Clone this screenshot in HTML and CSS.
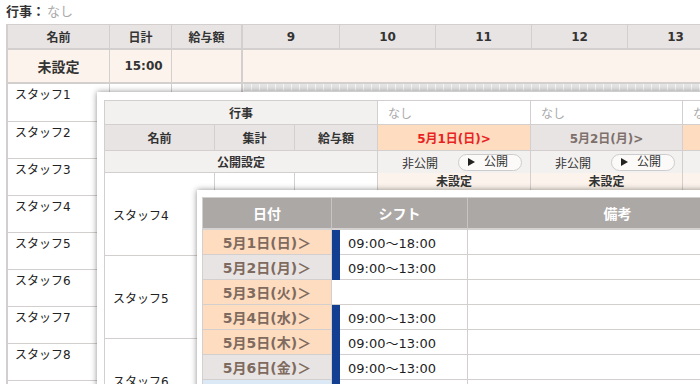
FILE: index.html
```html
<!DOCTYPE html>
<html lang="ja">
	<head>
		<meta charset="utf-8">
		<meta name="viewport" content="width=device-width, initial-scale=1.0">
		<title>シフト表</title>
		<link rel="stylesheet" href="styles.css">
	</head>
	<body>
		<div class=page>
			<p class=event><span class=eventLabel>行事：</span><span class=none>なし</span></p>
			<div class=sheet>
				<div class="sheetRow sheetHead">
					<div class=cell>名前</div>
					<div class=cell>日計</div>
					<div class="cell pay">給与額</div>
					<div class="cell hour">9</div>
					<div class="cell hour">10</div>
					<div class="cell hour">11</div>
					<div class="cell hour">12</div>
					<div class="cell hour">13</div>
				</div>
				<div class="sheetRow sheetUnset">
					<div class="cell unsetName">未設定</div>
					<div class="cell unsetTotal">15:00</div>
					<div class="cell pay"></div>
					<div class="cell wide"></div>
				</div>
				<div class="sheetRow staff first">
					<div class="cell staffName">スタッフ1</div>
					<div class=cell></div>
					<div class="cell pay"></div>
					<div class="cell wide ticks"></div>
				</div>
				<div class="sheetRow staff">
					<div class="cell staffName">スタッフ2</div>
					<div class=cell></div>
					<div class="cell pay"></div>
					<div class="cell wide ticks"></div>
				</div>
				<div class="sheetRow staff">
					<div class="cell staffName">スタッフ3</div>
					<div class=cell></div>
					<div class="cell pay"></div>
					<div class="cell wide ticks"></div>
				</div>
				<div class="sheetRow staff">
					<div class="cell staffName">スタッフ4</div>
					<div class=cell></div>
					<div class="cell pay"></div>
					<div class="cell wide ticks"></div>
				</div>
				<div class="sheetRow staff">
					<div class="cell staffName">スタッフ5</div>
					<div class=cell></div>
					<div class="cell pay"></div>
					<div class="cell wide ticks"></div>
				</div>
				<div class="sheetRow staff">
					<div class="cell staffName">スタッフ6</div>
					<div class=cell></div>
					<div class="cell pay"></div>
					<div class="cell wide ticks"></div>
				</div>
				<div class="sheetRow staff">
					<div class="cell staffName">スタッフ7</div>
					<div class=cell></div>
					<div class="cell pay"></div>
					<div class="cell wide ticks"></div>
				</div>
				<div class="sheetRow staff">
					<div class="cell staffName">スタッフ8</div>
					<div class=cell></div>
					<div class="cell pay"></div>
					<div class="cell wide ticks"></div>
				</div>
				<div class="sheetRow staff">
					<div class="cell staffName">スタッフ9</div>
					<div class=cell></div>
					<div class="cell pay"></div>
					<div class="cell wide ticks"></div>
				</div>
			</div>
		</div>

		<section class="dialog dayDialog">
			<div class=dayGrid>
				<div class="dcell label span3">行事</div>
				<div class="dcell eventCell">なし</div>
				<div class="dcell eventCell">なし</div>
				<div class="dcell eventCell">なし</div>

				<div class="dcell head">名前</div>
				<div class="dcell head">集計</div>
				<div class="dcell head">給与額</div>
				<div class="dcell dayHead holiday">5月1日(日)&gt;</div>
				<div class="dcell dayHead">5月2日(月)&gt;</div>
				<div class="dcell dayHead holiday">5月3日(火)&gt;</div>

				<div class="dcell label span3">公開設定</div>
				<div class="dcell publish"><span>非公開</span><button class=pill><span class=arrow></span>公開</button></div>
				<div class="dcell publish"><span>非公開</span><button class=pill><span class=arrow></span>公開</button></div>
				<div class="dcell publish"><span>非公開</span><button class=pill><span class=arrow></span>公開</button></div>

				<div class="dcell staffCell">スタッフ4</div>
				<div class="dcell blank"></div>
				<div class="dcell blank"></div>
				<div class="dcell dayCell"><div class=unset>未設定</div></div>
				<div class="dcell dayCell"><div class=unset>未設定</div></div>
				<div class="dcell dayCell"><div class=unset>未設定</div></div>

				<div class="dcell staffCell">スタッフ5</div>
				<div class="dcell blank"></div>
				<div class="dcell blank"></div>
				<div class="dcell dayCell"><div class=unset>未設定</div></div>
				<div class="dcell dayCell"><div class=unset>未設定</div></div>
				<div class="dcell dayCell"><div class=unset>未設定</div></div>

				<div class="dcell staffCell">スタッフ6</div>
				<div class="dcell blank"></div>
				<div class="dcell blank"></div>
				<div class="dcell dayCell"><div class=unset>未設定</div></div>
				<div class="dcell dayCell"><div class=unset>未設定</div></div>
				<div class="dcell dayCell"><div class=unset>未設定</div></div>
			</div>
		</section>

		<section class="dialog shiftDialog">
			<div class=shiftGrid>
				<div class=shead>日付</div>
				<div class=shead>シフト</div>
				<div class=shead>備考</div>

				<div class="date holiday">5月1日(日)＞</div>
				<div class="shift on">09:00～18:00</div>
				<div class=note></div>

				<div class=date>5月2日(月)＞</div>
				<div class="shift on">09:00～13:00</div>
				<div class=note></div>

				<div class="date holiday">5月3日(火)＞</div>
				<div class=shift></div>
				<div class=note></div>

				<div class="date holiday">5月4日(水)＞</div>
				<div class="shift on">09:00～13:00</div>
				<div class=note></div>

				<div class="date holiday">5月5日(木)＞</div>
				<div class="shift on">09:00～13:00</div>
				<div class=note></div>

				<div class=date>5月6日(金)＞</div>
				<div class="shift on">09:00～13:00</div>
				<div class=note></div>

				<div class="date saturday">5月7日(土)＞</div>
				<div class="shift on">09:00～13:00</div>
				<div class=note></div>
			</div>
		</section>
	</body>
</html>
```

FILE: styles.css
```css
html, body {
	overflow: hidden;
}

body {
	margin: 0;
	font-family: "DejaVu Sans", "Noto Sans CJK JP", sans-serif;
	font-size: 12px;
	color: #333;
	background-color: #fff;
}

.page {
	padding: 4px 0 0 6px;
}

.event {
	margin: 0 0 4px;
	font-size: 13px;
	line-height: 16px;
}

.eventLabel {
	font-weight: bold;
}

.none {
	color: #aaa;
	margin-left: 2px;
}

/* background schedule sheet */

.sheet {
	width: 718px;
	border-left: 2px solid #d3cfce;
	border-top: 1px solid #d3cfce;
}

.sheetRow {
	display: grid;
	grid-template-columns: 102px 62px 71px 97px 96px 96px 96px 96px;
}

.cell {
	box-sizing: border-box;
	border-right: 1px solid #d3cfce;
	border-bottom: 1px solid #d3cfce;
}

.cell.pay {
	border-right-width: 2px;
}

.cell.wide {
	grid-column: span 5;
}

.sheetHead {
	height: 25px;
	background-color: #e8e4e3;
	font-weight: bold;
}

.sheetHead .cell {
	display: flex;
	align-items: center;
	justify-content: center;
	border-bottom-width: 2px;
}

.sheetUnset {
	height: 34px;
	background-color: #fcf4ec;
	font-weight: bold;
}

.sheetUnset .cell {
	display: flex;
	align-items: center;
	justify-content: center;
	border-bottom-width: 2px;
}

.unsetName {
	font-size: 14px;
}

.unsetTotal {
	padding-left: 6px;
}

.staff {
	height: 37px;
}

.staff.first {
	height: 38px;
}

.staffName {
	padding: 2px 0 0 7px;
	line-height: 18px;
	color: #222;
}

.ticks {
	background: repeating-linear-gradient(90deg, #f7f7f7 0 1px, #e4e4e4 1px 8px) 0 0 / 100% 7px no-repeat;
}

/* dialogs */

.dialog {
	position: absolute;
	background-color: #fff;
	box-shadow: 0 0 6px rgba(0, 0, 0, 0.45);
	width: 800px;
	height: 400px;
}

.dayDialog {
	left: 97px;
	top: 92px;
	padding: 8px 0 0 7px;
}

.dayGrid {
	display: grid;
	grid-template-columns: 110px 80px 83px 153px 152px 152px;
	grid-template-rows: 24px 26px 22px 83px 83px 83px;
	border-left: 1px solid #d3cfce;
	border-top: 1px solid #d3cfce;
}

.dcell {
	box-sizing: border-box;
	border-right: 1px solid #d3cfce;
	border-bottom: 1px solid #d3cfce;
	display: flex;
	align-items: center;
	justify-content: center;
}

.span3 {
	grid-column: span 3;
}

.label {
	background-color: #f3f1f0;
	font-weight: bold;
}

.eventCell {
	justify-content: flex-start;
	padding-left: 10px;
	color: #aaa;
}

.head {
	background-color: #e8e4e3;
	font-weight: bold;
}

.dayHead {
	background-color: #e8e4e3;
	color: #7d706b;
	font-weight: bold;
}

.dayHead.holiday {
	background-color: #fddcc0;
	color: #e8231f;
}

.publish {
	background-color: #f3f1f0;
	border-bottom: none;
	justify-content: flex-start;
	padding-left: 24px;
	gap: 20px;
}

.pill {
	box-sizing: border-box;
	width: 64px;
	height: 17px;
	border: 1px solid #ccc;
	border-radius: 9px;
	background-color: #fbfaf9;
	font-family: inherit;
	font-size: 12px;
	color: #333;
	padding: 0 0 0 9px;
	display: flex;
	align-items: center;
	line-height: 1;
}

.arrow {
	width: 0;
	height: 0;
	border-left: 7px solid #222;
	border-top: 4px solid transparent;
	border-bottom: 4px solid transparent;
	margin-right: 9px;
}

.staffCell {
	justify-content: flex-start;
	padding-left: 8px;
	color: #222;
}

.dayCell {
	align-items: stretch;
	flex-direction: column;
	justify-content: flex-start;
}

.unset {
	height: 18px;
	line-height: 18px;
	background-color: #fcf4ec;
	font-weight: bold;
	text-align: center;
}

.shiftDialog {
	left: 197px;
	top: 190px;
	padding: 7px 0 0 5px;
}

.shiftGrid {
	display: grid;
	grid-template-columns: 129px 136px 300px;
	grid-template-rows: 32px;
	grid-auto-rows: 25px;
	border-left: 1px solid #d3cfce;
	border-top: 1px solid #d3cfce;
}

.shiftGrid > div {
	box-sizing: border-box;
	border-right: 1px solid #d3cfce;
	border-bottom: 1px solid #d3cfce;
	display: flex;
	align-items: center;
}

.shiftGrid > .shead {
	justify-content: center;
	background-color: #aca8a6;
	color: #fff;
	font-weight: bold;
	font-size: 14px;
	border-right-color: #c8c4c3;
	border-bottom: 2px solid #d6d2d1;
}

.date {
	justify-content: center;
	background-color: #e8e4e3;
	color: #7f6a5e;
	font-weight: bold;
	font-size: 14px;
}

.date.holiday {
	background-color: #fddcc0;
}

.date.saturday {
	background-color: #dbe9f7;
}

.shift {
	position: relative;
	padding-left: 16px;
	font-size: 13px;
	color: #1e1e1e;
}

.shift.on::before {
	content: "";
	position: absolute;
	left: 0;
	top: 0;
	bottom: -1px;
	width: 8px;
	background-color: #123f91;
}
```
